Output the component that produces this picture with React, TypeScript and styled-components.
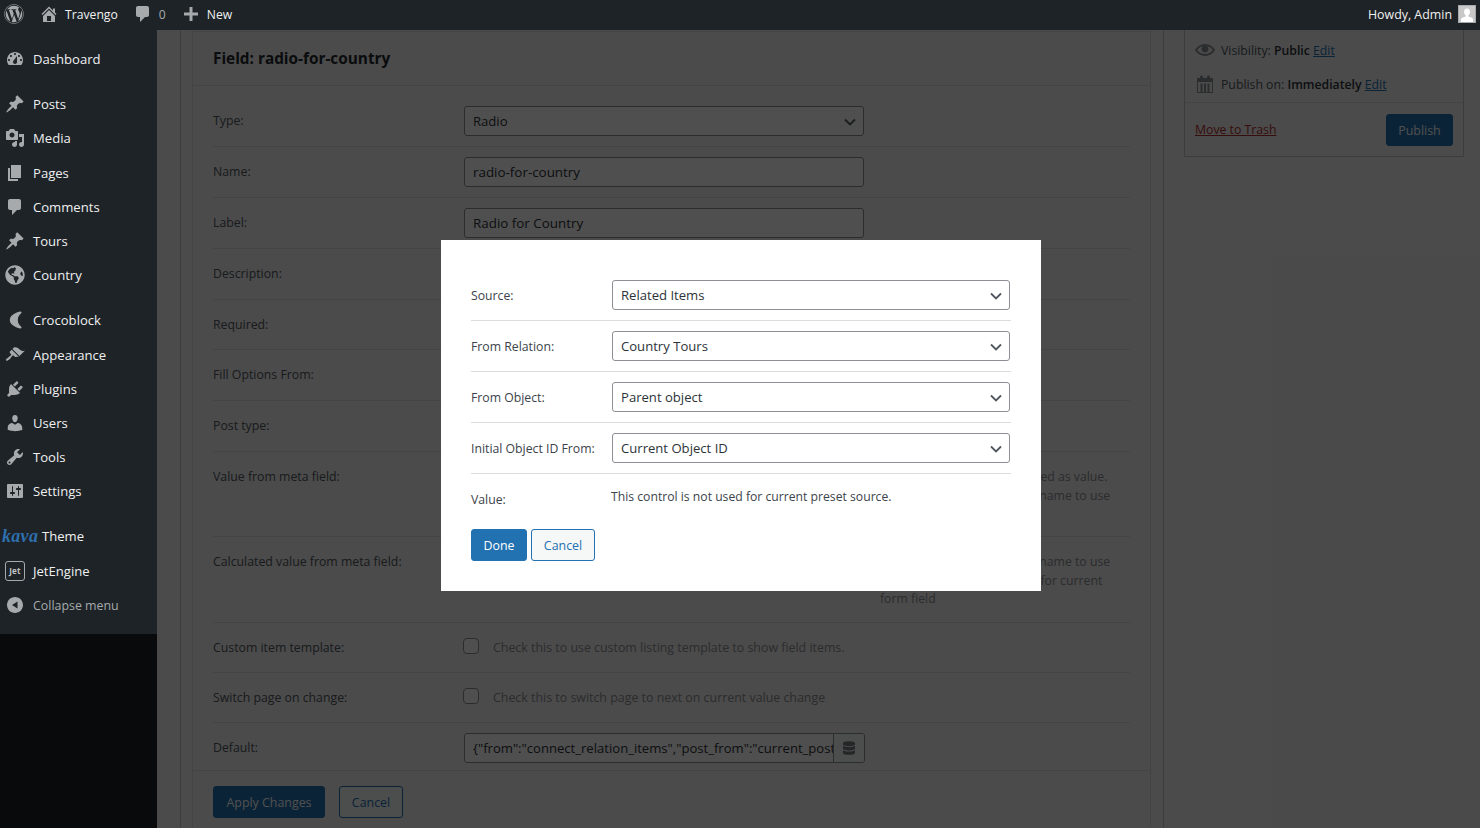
import React from "react";
import styled, { createGlobalStyle } from "styled-components";
import { FaWordpress, FaGlobeAmericas, FaDatabase } from "react-icons/fa";

const Global = createGlobalStyle`
  html, body { margin: 0; height: 100%; overflow: hidden; background: #f0f0f1; }
  #root { height: 100%; }
  * { box-sizing: border-box; }
  body { font-family: "Open Sans", "Liberation Sans", sans-serif; font-size: 13px; color: #3c434a; }
`;

const Page = styled.div`
  width: 1480px; height: 828px; overflow: hidden; position: relative;
  display: flex; flex-direction: column;
`;
const TopBar = styled.header`
  height: 30px; flex: none; background: #1d2327; color: #f0f0f1; position: relative; z-index: 3;
  display: flex; align-items: center; padding: 0 4px 2px 4px; font-size: 12.2px;
`;
const BarItem = styled.span<{ $gap?: number; $ml?: number; $dim?: boolean }>`
  display: inline-flex; align-items: center; gap: ${p => p.$gap ?? 6}px; margin-left: ${p => p.$ml ?? 0}px;
  color: ${p => (p.$dim ? "#a7aaad" : "#f0f0f1")};
  svg { color: #a7aaad; fill: currentColor; flex: none; }
`;
const Howdy = styled(BarItem)` font-size: 12.4px; `;
const BarSpacer = styled.div` flex: 1; `;
const Avatar = styled.span`
  width: 18px; height: 18px; background: #c8c8c8; border: 1px solid #a7aaad; display: block; margin-left: 6px; overflow: hidden;
  svg { display: block; }
`;
const Body = styled.div` flex: 1; display: flex; min-height: 0; `;
const Side = styled.aside` width: 157px; flex: none; background: #1d2327; `;
const Menu = styled.nav`
  background: #1d2327; position: relative; z-index: 3; padding: 12px 0 12px; height: 604px;
  display: flex; flex-direction: column;
`;
const MenuItem = styled.div<{ $gapTop?: boolean; $muted?: boolean }>`
  height: 34.2px; flex: none; display: flex; align-items: center; gap: 8px; padding-left: 5px;
  padding-top: ${p => (p.$muted ? "1px" : "0")};
  margin-top: ${p => (p.$gapTop ? "11px" : "0")};
  color: ${p => (p.$muted ? "#a7aaad" : "#f0f0f1")}; font-size: ${p => (p.$muted ? "12.4px" : "13.1px")};
  svg { width: 20px; height: 20px; color: #a7aaad; fill: currentColor; flex: none; }
`;
const KavaItem = styled(MenuItem)` padding-left: 2px; gap: 6px; padding-bottom: 1px; `;
const KavaMark = styled.span`
  font-family: "Liberation Serif", serif; font-style: italic; font-weight: 700; color: #2f6fae; font-size: 18px; line-height: 18px; height: 18px; width: 34px; letter-spacing: .3px;
`;
const JetMark = styled.span`
  width: 20px; height: 20px; border: 1px solid #a7aaad; border-radius: 3px; flex: none; color: #c3c4c7;
  font-size: 8px; font-weight: 700; display: flex; align-items: center; justify-content: center; letter-spacing: .2px;
`;
const Main = styled.main`
  flex: 1; min-width: 0; display: flex; align-items: flex-start; padding: 0 16px 0 23px; gap: 20px;
`;
const Outer = styled.div`
  width: 984px; flex: none; height: 798px; border: 1px solid #c3c4c7; border-width: 0 1px; padding: 1px 12px 0 11px; background: #f0f0f1;
`;
const Panel = styled.section`
  background: #f1f1f1; border: 1px solid #dcdcde; height: 900px; display: flex; flex-direction: column;
`;
const PanelHead = styled.div`
  height: 54px; border-bottom: 1px solid #dcdcde; display: flex; align-items: center; padding: 0 20px 2px;
  font-size: 15.35px; font-weight: 700; color: #23282d; flex: none;
`;
const Rows = styled.div` padding: 10px 20px 0; flex: none; `;
const Row = styled.div<{ $h: number; $last?: boolean }>`
  height: ${p => p.$h}px; display: flex; align-items: flex-start; border-bottom: ${p => (p.$last ? "none" : "1px solid #dcdcde")};
`;
const RowLabel = styled.div<{ $top?: number }>`
  width: 251px; flex: none; color: #50575e; font-size: 12.3px; line-height: 18px; padding-top: ${p => p.$top ?? 16}px;
`;
const Selectish = styled.div<{ $w: number }>`
  position: relative; width: ${p => p.$w}px; flex: none;
  svg { position: absolute; right: 7px; top: 9px; width: 14px; height: 14px; color: #50575e; pointer-events: none; }
`;
const Select = styled.select`
  appearance: none; width: 100%; height: 30px; border: 1px solid #8c8f94; border-radius: 3px; background: #fff;
  font: 13.1px "Open Sans", sans-serif; color: #2c3338; padding: 0 24px 0 8px; margin: 0; display: block; outline: none;
`;
const Input = styled.input`
  width: 400px; height: 30px; border: 1px solid #8c8f94; border-radius: 3px; background: #fff; flex: none; margin: 0;
  font: 13.4px "Open Sans", sans-serif; color: #2c3338; padding: 0 8px; display: block; outline: none;
`;
const DefaultWrap = styled.div`
  display: flex; width: 401px; height: 30px; border: 1px solid #8c8f94; border-radius: 3px; background: #fff; overflow: hidden;
`;
const DefaultInput = styled.input`
  flex: 1; min-width: 0; height: 28px; border: 0; background: transparent; padding: 0 0 0 8px; outline: none; margin: 0;
  font: 13.1px "Open Sans", sans-serif; color: #2c3338;
`;
const DefaultBtn = styled.span`
  width: 31px; flex: none; border-left: 1px solid #8c8f94; display: flex; align-items: center; justify-content: center; background: #f6f7f7; color: #787c82;
  svg { width: 12px; height: 14px; }
`;
const CheckBox = styled.span`
  width: 16px; height: 16px; border: 1px solid #8c8f94; border-radius: 4px; background: #fff; flex: none; display: block;
`;
const CheckLine = styled.div`
  display: flex; align-items: flex-start; gap: 14px; padding-top: 15px; font-size: 12.4px; line-height: 20px; color: #8c8f94; margin-left: -1px;
`;
const FieldWithNote = styled.div` display: flex; gap: 16px; padding-top: 10px; `;
const Note = styled.div`
  width: 250px; font-size: 12.25px; line-height: 18.5px; color: #8c8f94; padding-top: 6px; white-space: nowrap;
`;
const ControlCell = styled.div` padding-top: 10px; flex: none; `;
const PanelFoot = styled.div`
  border-top: 1px solid #dcdcde; margin-top: 0; padding: 15px 20px; display: flex; gap: 14px;
`;
const Btn = styled.button<{ $primary?: boolean; $w: number; $h?: number }>`
  width: ${p => p.$w}px; height: ${p => p.$h ?? 32}px; border-radius: 3px; font: 12.4px "Open Sans", sans-serif; padding: 0; cursor: pointer;
  border: 1px solid #2271b1; background: ${p => (p.$primary ? "#2271b1" : "#f6f7f7")}; color: ${p => (p.$primary ? "#fff" : "#2271b1")};
`;
const Sidebar = styled.div`
  width: 280px; flex: none; height: 127px; border: 1px solid #c3c4c7; border-top: 0; background: #f1f1f1; display: flex; flex-direction: column;
`;
const MiscRow = styled.div`
  height: 34px; display: flex; align-items: center; gap: 6px; padding-left: 10px; font-size: 12.25px; color: #50575e;
  svg { width: 20px; height: 20px; color: #8c8f94; fill: currentColor; flex: none; }
  strong { color: #2c3338; font-weight: 600; }
  a { color: #2271b1; text-decoration: underline; }
`;
const MiscBlock = styled.div`
  padding-top: 3px; height: 73px; border-bottom: 1px solid #dcdcde; flex: none;
`;
const PublishRow = styled.div`
  flex: 1; display: flex; align-items: center; justify-content: space-between; padding: 0 10px;
  a { color: #b32d2e; text-decoration: underline; font-size: 12.25px; }
`;
const PublishBtn = styled(Btn)` padding-top: 1px; `;
const Overlay = styled.div`
  position: absolute; inset: 0; z-index: 2; background: rgba(0,0,0,.69);
  display: flex; align-items: center; justify-content: center; padding: 3px 0 0 2px;
`;
const Modal = styled.div`
  width: 600px; height: 351px; background: #fff; padding: 30px; display: flex; flex-direction: column;
`;
const ModalRow = styled.div<{ $last?: boolean }>`
  height: ${p => (p.$last ? 49 : 51)}px; width: 540px; flex: none; display: flex; align-items: ${p => (p.$last ? "flex-start" : "center")};
  border-bottom: ${p => (p.$last ? "none" : "1px solid #dcdcde")};
`;
const ModalLabel = styled.div<{ $top?: number }>`
  width: 141px; flex: none; font-size: 12.25px; color: #3c434a; padding-top: ${p => p.$top ?? 0}px;
`;
const ModalNote = styled.div`
  font-size: 12.2px; color: #3c434a; margin-left: -1px; padding-top: 14px;
`;
const ModalActions = styled.div` display: flex; gap: 4px; margin-top: 6px; `;

const P = ({ d }: { d: string }) => (
  <svg viewBox="0 0 20 20"><path fillRule="evenodd" d={d} /></svg>
);
const icons = {
  dashboard: "M3.76 16h12.48c1.1-1.37 1.76-3.11 1.76-5 0-4.42-3.58-8-8-8s-8 3.58-8 8c0 1.89.66 3.63 1.76 5zM10 4c.55 0 1 .45 1 1s-.45 1-1 1-1-.45-1-1 .45-1 1-1zM6 6c.55 0 1 .45 1 1s-.45 1-1 1-1-.45-1-1 .45-1 1-1zm8 0c.55 0 1 .45 1 1s-.45 1-1 1-1-.45-1-1 .45-1 1-1zm-5.37 5.55L12 7v6c0 1.1-.9 2-2 2s-2-.9-2-2c0-.57.24-1.08.63-1.45zM4 10c.55 0 1 .45 1 1s-.45 1-1 1-1-.45-1-1 .45-1 1-1zm12 0c.55 0 1 .45 1 1s-.45 1-1 1-1-.45-1-1 .45-1 1-1z",
  pin: "M10.44 3.02l1.82-1.82 6.36 6.35-1.83 1.82c-1.05-.68-2.48-.57-3.41.36l-.75.75c-.92.93-1.04 2.35-.35 3.41l-1.83 1.82-2.41-2.41-2.8 2.79c-.42.42-3.38 2.71-3.8 2.29s1.86-3.39 2.28-3.81l2.79-2.79L4.1 9.36l1.83-1.82c1.05.69 2.48.57 3.4-.36l.75-.75c.93-.92 1.05-2.35.36-3.41z",
  media: "M13 11V4c0-.55-.45-1-1-1h-1.67L9 1H5L3.67 3H2c-.55 0-1 .45-1 1v7c0 .55.45 1 1 1h10c.55 0 1-.45 1-1zM7 4.5c1.38 0 2.5 1.12 2.5 2.5S8.38 9.5 7 9.5 4.5 8.38 4.5 7 5.62 4.5 7 4.5zM14 6h5v10.5c0 1.38-1.12 2.5-2.5 2.5S14 17.88 14 16.5s1.12-2.5 2.5-2.5c.17 0 .34.02.5.05V9h-3V6zm-4 8.05V13h2v3.5c0 1.38-1.12 2.5-2.5 2.5S7 17.88 7 16.5 8.12 14 9.5 14c.17 0 .34.02.5.05z",
  pages: "M6 15V2h10v13H6zm-1 1h8v2H3V5h2v11z",
  comment: "M5 2h9c1.1 0 2 .9 2 2v7c0 1.1-.9 2-2 2h-2l-5 5v-5H5c-1.1 0-2-.9-2-2V4c0-1.1.9-2 2-2z",
  croco: "M15.2 1.500c1.100-.3 1.800.9 1 1.700C14 5 12.800 7.300 12.800 10s1.200 5 3.400 6.800c.8.8.1 2-1 1.700C9.500 17.200 4.800 14.200 4.800 10S9.500 2.800 15.200 1.500z",
  brush: "M14.48 11.06L7.41 3.99l1.5-1.5c.5-.56 2.3-.47 3.51.32 1.21.8 1.43 1.28 2.91 2.1 1.18.64 2.45 1.26 4.45.85zm-.71.71L6.7 4.7 4.93 6.47c-.39.39-.39 1.02 0 1.41l1.06 1.06c.39.39.39 1.03 0 1.42-.6.6-1.43 1.11-2.21 1.69-.35.26-.7.53-1.01.84C1.43 13.23.4 14.98 1.100 15.6c.53.53 2.4-.56 3.75-1.71.3-.31.58-.66.84-1.01.58-.78 1.09-1.61 1.69-2.21.39-.39 1.02-.39 1.41 0l1.06 1.06c.39.39 1.02.39 1.41 0z",
  plug: "M13.11 4.36L9.87 7.6 8 5.73l3.24-3.24c.35-.34 1.05-.2 1.56.32.52.51.66 1.21.31 1.55zm-8 1.77l.91-1.12 9.01 9.01-1.19.84c-.71.71-2.63 1.16-3.82 1.16H6.14L4.9 17.26c-.59.59-1.54.59-2.12 0-.59-.58-.59-1.53 0-2.12l1.24-1.24v-3.88c0-1.13.4-3.19 1.09-3.89zm7.26 3.97l3.24-3.24c.34-.35 1.04-.21 1.55.31.52.51.66 1.21.31 1.55l-3.24 3.25z",
  user: "M10 9.25c-2.27 0-2.73-3.44-2.73-3.44C7 4.020 7.82 2 9.970 2c2.160 0 2.980 2.020 2.710 3.810 0 0-.41 3.440-2.680 3.440zm0 2.570L12.720 10c2.390 0 4.520 2.330 4.520 4.530v2.490s-3.650 1.130-7.240 1.130c-3.650 0-7.240-1.130-7.240-1.130v-2.490c0-2.250 1.940-4.480 4.470-4.480z",
  tools: "M16.680 9.770c-1.340 1.340-3.300 1.670-4.950.99l-5.410 6.520c-.99.99-2.590.99-3.580 0s-.99-2.590 0-3.570l6.520-5.420c-.68-1.650-.35-3.610.99-4.950 1.280-1.280 3.120-1.620 4.720-1.060l-2.890 2.890 2.820 2.820 2.860-2.870c.53 1.580.18 3.390-1.080 4.670zM3.810 16.210c.4.39 1.040.39 1.430 0 .4-.4.4-1.040 0-1.430-.39-.4-1.030-.4-1.430 0-.39.39-.39 1.030 0 1.430z",
  settings: "M18 16V4c0-.55-.45-1-1-1H3c-.55 0-1 .45-1 1v12c0 .55.45 1 1 1h14c.55 0 1-.45 1-1zM8 11h1c.55 0 1 .45 1 1s-.45 1-1 1H8v1.500c0 .28-.22.5-.5.5s-.5-.22-.5-.5V13H6c-.55 0-1-.45-1-1s.45-1 1-1h1V5.500c0-.28.22-.5.5-.5s.5.22.5.5V11zm5-2h-1c-.55 0-1-.45-1-1s.45-1 1-1h1V5.500c0-.28.22-.5.5-.5s.5.22.5.5V7h1c.55 0 1 .45 1 1s-.45 1-1 1h-1v5.500c0 .28-.22.5-.5.5s-.5-.22-.5-.5V9z",
  collapse: "M18 10c0-4.420-3.580-8-8-8s-8 3.580-8 8 3.580 8 8 8 8-3.580 8-8zm-5.500-3.500v7L7 10z",
  home: "M16 8.500l1.530 1.530-1.060 1.060L10 4.620l-6.470 6.470-1.060-1.060L10 2.500l4 4v-2h2v4zm-6-2.460l6 5.990V18H4v-5.970zM12 17v-5H8v5h4z",
  plus: "M17 8.500v3h-5.500V17h-3v-5.500H3v-3h5.500V3h3v5.500z",
  eye: "M19.700 9.400C17.700 6 14 3.900 10 3.900S2.300 6 .3 9.400L0 10l.3.6c2 3.400 5.700 5.500 9.700 5.500s7.700-2.100 9.700-5.500l.3-.6-.3-.6zM10 14.100c-3.100 0-6-1.600-7.700-4.100C3.600 8 5.700 6.600 8 6.100c-.9.6-1.500 1.700-1.500 2.900 0 1.900 1.600 3.500 3.500 3.500s3.500-1.600 3.500-3.500c0-1.200-.6-2.300-1.500-2.900 2.300.5 4.400 1.900 5.700 3.900-1.700 2.500-4.600 4.100-7.700 4.100z",
  calendar: "M15 4h3v15H2V4h3V3c0-.41.15-.76.44-1.060.29-.29.65-.44 1.060-.44s.77.15 1.060.44c.29.3.44.65.44 1.060v1h4V3c0-.41.15-.76.44-1.060.29-.29.65-.44 1.060-.44s.77.15 1.060.44c.29.3.44.65.44 1.060v1zM3 8v10h2.500V9.500h2V18h1.500V9.500h2V18h1.500V9.500h2V18H17V8H3z",
};
const Chevron = () => (
  <svg viewBox="0 0 14 14" fill="none" stroke="currentColor" strokeWidth="1.8"><path d="M2 4.500l5 5 5-5" /></svg>
);

const Sel = ({ w, v }: { w: number; v: string }) => (
  <Selectish $w={w}>
    <Select defaultValue={v}><option>{v}</option></Select>
    <Chevron />
  </Selectish>
);

const menu1 = [["pin", "Posts"], ["media", "Media"], ["pages", "Pages"], ["comment", "Comments"], ["pin", "Tours"]] as const;
const menu2 = [["brush", "Appearance"], ["plug", "Plugins"], ["user", "Users"], ["tools", "Tools"], ["settings", "Settings"]] as const;

export default function App() {
  return (
    <Page>
      <Global />
      <TopBar>
        <BarItem><FaWordpress size={20} /></BarItem>
        <BarItem $ml={15} $gap={6}><svg width="20" height="20" viewBox="0 0 20 20"><path fillRule="evenodd" d={icons.home} /></svg>Travengo</BarItem>
        <BarItem $ml={15} $gap={6} $dim><svg width="20" height="20" viewBox="0 0 20 20"><path d={icons.comment} /></svg>0</BarItem>
        <BarItem $ml={15} $gap={6}><svg width="20" height="20" viewBox="0 0 20 20"><path d={icons.plus} /></svg>New</BarItem>
        <BarSpacer />
        <Howdy $gap={0}>Howdy, Admin<Avatar><svg width="16" height="16" viewBox="0 0 16 16"><path fill="#fff" d="M8 2.500c1.800 0 3 1.400 3 3.300 0 1.600-.8 3-1.800 3.600v1c2 .5 4.800 1.200 4.800 3.100V16H2v-2.500c0-1.900 2.800-2.600 4.800-3.100v-1C5.800 8.800 5 7.400 5 5.800c0-1.900 1.200-3.300 3-3.300z" /></svg></Avatar></Howdy>
      </TopBar>
      <Body>
        <Side>
          <Menu>
            <MenuItem><P d={icons.dashboard} />Dashboard</MenuItem>
            {menu1.map(([k, t], i) => (
              <MenuItem key={t} $gapTop={i === 0}><P d={icons[k]} />{t}</MenuItem>
            ))}
            <MenuItem><FaGlobeAmericas />Country</MenuItem>
            <MenuItem $gapTop><P d={icons.croco} />Crocoblock</MenuItem>
            {menu2.map(([k, t]) => (
              <MenuItem key={t}><P d={icons[k]} />{t}</MenuItem>
            ))}
            <KavaItem $gapTop><KavaMark>kava</KavaMark>Theme</KavaItem>
            <MenuItem><JetMark>Jet</JetMark>JetEngine</MenuItem>
            <MenuItem $muted><P d={icons.collapse} />Collapse menu</MenuItem>
          </Menu>
        </Side>
        <Main>
          <Outer>
            <Panel>
              <PanelHead>Field: radio-for-country</PanelHead>
              <Rows>
                <Row $h={51}><RowLabel>Type:</RowLabel><ControlCell><Sel w={400} v="Radio" /></ControlCell></Row>
                <Row $h={51}><RowLabel>Name:</RowLabel><ControlCell><Input readOnly value="radio-for-country" /></ControlCell></Row>
                <Row $h={51}><RowLabel>Label:</RowLabel><ControlCell><Input readOnly value="Radio for Country" /></ControlCell></Row>
                <Row $h={51}><RowLabel>Description:</RowLabel><ControlCell><Input readOnly value="" /></ControlCell></Row>
                <Row $h={50}><RowLabel>Required:</RowLabel><CheckLine><CheckBox /></CheckLine></Row>
                <Row $h={51}><RowLabel>Fill Options From:</RowLabel><ControlCell><Sel w={400} v="Posts" /></ControlCell></Row>
                <Row $h={51}><RowLabel>Post type:</RowLabel><ControlCell><Sel w={400} v="Tours" /></ControlCell></Row>
                <Row $h={85}>
                  <RowLabel>Value from meta field:</RowLabel>
                  <FieldWithNote><Input readOnly value="" />
                    <Note>By default, post ID will be used as value.<br />Here you can set meta field name to use</Note>
                  </FieldWithNote>
                </Row>
                <Row $h={86}>
                  <RowLabel>Calculated value from meta field:</RowLabel>
                  <FieldWithNote><Input readOnly value="" />
                    <Note>Here you can set meta field name to use<br />This value will be calculated for current<br />form field</Note>
                  </FieldWithNote>
                </Row>
                <Row $h={50}><RowLabel>Custom item template:</RowLabel><CheckLine><CheckBox />Check this to use custom listing template to show field items.</CheckLine></Row>
                <Row $h={50}><RowLabel>Switch page on change:</RowLabel><CheckLine><CheckBox />Check this to switch page to next on current value change</CheckLine></Row>
                <Row $h={47} $last><RowLabel>Default:</RowLabel>
                  <ControlCell><DefaultWrap><DefaultInput readOnly value='{"from":"connect_relation_items","post_from":"current_post_id"}' /><DefaultBtn><FaDatabase /></DefaultBtn></DefaultWrap></ControlCell>
                </Row>
              </Rows>
              <PanelFoot>
                <Btn $primary $w={112}>Apply Changes</Btn>
                <Btn $w={64}>Cancel</Btn>
              </PanelFoot>
            </Panel>
          </Outer>
          <Sidebar>
            <MiscBlock>
              <MiscRow><P d={icons.eye} /><span>Visibility: <strong>Public</strong> <a>Edit</a></span></MiscRow>
              <MiscRow><P d={icons.calendar} /><span>Publish on: <strong>Immediately</strong> <a>Edit</a></span></MiscRow>
            </MiscBlock>
            <PublishRow><a>Move to Trash</a><PublishBtn $primary $w={67}>Publish</PublishBtn></PublishRow>
          </Sidebar>
        </Main>
      </Body>
      <Overlay>
        <Modal>
          <ModalRow><ModalLabel>Source:</ModalLabel><Sel w={398} v="Related Items" /></ModalRow>
          <ModalRow><ModalLabel>From Relation:</ModalLabel><Sel w={398} v="Country Tours" /></ModalRow>
          <ModalRow><ModalLabel>From Object:</ModalLabel><Sel w={398} v="Parent object" /></ModalRow>
          <ModalRow><ModalLabel>Initial Object ID From:</ModalLabel><Sel w={398} v="Current Object ID" /></ModalRow>
          <ModalRow $last><ModalLabel $top={17}>Value:</ModalLabel><ModalNote>This control is not used for current preset source.</ModalNote></ModalRow>
          <ModalActions>
            <Btn $primary $w={56}>Done</Btn>
            <Btn $w={64}>Cancel</Btn>
          </ModalActions>
        </Modal>
      </Overlay>
    </Page>
  );
}
